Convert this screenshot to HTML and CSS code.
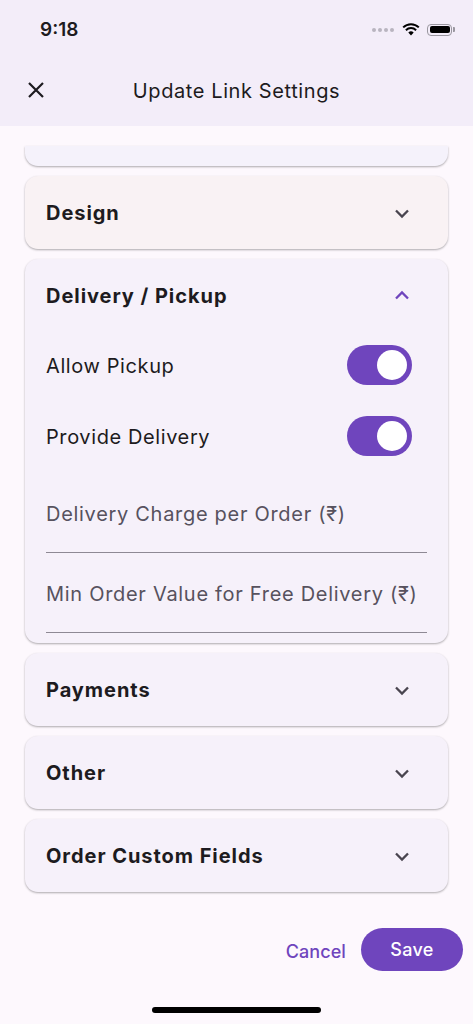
FILE: index.html
```html
<!DOCTYPE html>
<html lang="en">
<head>
  <meta charset="UTF-8" />
  <title>Update Link Settings</title>
  <link rel="stylesheet" href="styles.css">
</head>
<body>

  <div class="status">
    <span class="time">9:18</span>
    <div class="status-icons">
      <span class="dots"><i></i><i></i><i></i><i></i></span>
      <svg class="wifi" width="18" height="13" viewBox="0 0 18 13">
        <path d="M9 12.5 L6.3 9.6 A3.8 3.8 0 0 1 11.7 9.6 Z" fill="#000"/>
        <path d="M3.9 7.2 A7.2 7.2 0 0 1 14.1 7.2" stroke="#000" stroke-width="2" fill="none"/>
        <path d="M1.2 4.4 A11 11 0 0 1 16.8 4.4" stroke="#000" stroke-width="2" fill="none"/>
      </svg>
      <div class="battery"><div class="battery-fill"></div></div>
      <div class="battery-tip"></div>
    </div>
  </div>

  <header class="appbar">
    <svg class="close" width="24" height="24" viewBox="0 0 24 24">
      <path d="M5 5 L19 19 M19 5 L5 19" stroke="#1d1b20" stroke-width="2.2" fill="none"/>
    </svg>
    <h1>Update Link Settings</h1>
  </header>

  <main class="list">
    <div class="card cut"></div>

    <section class="card pink">
      <div class="card-head">
        <h2>Design</h2>
        <svg class="chev" width="24" height="24" viewBox="0 0 24 24"><path d="M6 9.5 L12 15.5 L18 9.5" stroke="#49454f" stroke-width="2.3" fill="none"/></svg>
      </div>
    </section>

    <section class="card">
      <div class="card-head">
        <h2>Delivery / Pickup</h2>
        <svg class="chev" width="24" height="24" viewBox="0 0 24 24"><path d="M6 14.5 L12 8.5 L18 14.5" stroke="#6f45bd" stroke-width="2.3" fill="none"/></svg>
      </div>
      <div class="switch-row">
        <span>Allow Pickup</span>
        <div class="switch"><div class="thumb"></div></div>
      </div>
      <div class="switch-row">
        <span>Provide Delivery</span>
        <div class="switch"><div class="thumb"></div></div>
      </div>
      <div class="fields">
        <div class="field">Delivery Charge per Order (₹)</div>
        <div class="field">Min Order Value for Free Delivery (₹)</div>
      </div>
    </section>

    <section class="card">
      <div class="card-head">
        <h2>Payments</h2>
        <svg class="chev" width="24" height="24" viewBox="0 0 24 24"><path d="M6 9.5 L12 15.5 L18 9.5" stroke="#49454f" stroke-width="2.3" fill="none"/></svg>
      </div>
    </section>

    <section class="card">
      <div class="card-head">
        <h2>Other</h2>
        <svg class="chev" width="24" height="24" viewBox="0 0 24 24"><path d="M6 9.5 L12 15.5 L18 9.5" stroke="#49454f" stroke-width="2.3" fill="none"/></svg>
      </div>
    </section>

    <section class="card">
      <div class="card-head">
        <h2>Order Custom Fields</h2>
        <svg class="chev" width="24" height="24" viewBox="0 0 24 24"><path d="M6 9.5 L12 15.5 L18 9.5" stroke="#49454f" stroke-width="2.3" fill="none"/></svg>
      </div>
    </section>
  </main>

  <footer class="actions">
    <button class="text-btn">Cancel</button>
    <button class="save-btn">Save</button>
  </footer>

  <div class="home-bar"></div>

</body>
</html>
```

FILE: styles.css
```css
html, body {
  margin: 0;
  padding: 0;
  background: #fdf8fd;
  font-family: Inter, Roboto, 'Noto Sans', sans-serif;
  color: #1d1b20;
}

body {
  width: 473px;
  height: 1024px;
  overflow: hidden;
  position: relative;
}

.status {
  height: 55px;
  background: #f3edf9;
  display: flex;
  align-items: center;
  justify-content: space-between;
  padding: 0 18px 0 40px;
  box-sizing: border-box;
}

.time {
  font-weight: 600;
  font-size: 19px;
  margin-top: 4px;
}

.status-icons {
  display: flex;
  align-items: center;
  margin-top: 4px;
}

.dots {
  display: flex;
  gap: 2px;
  margin-right: 8px;
}

.dots i {
  width: 4px;
  height: 4px;
  border-radius: 50%;
  background: #b9b4c0;
}

.wifi {
  margin-right: 7px;
}

.battery {
  width: 25px;
  height: 12px;
  border: 1.5px solid #9a97a0;
  border-radius: 4px;
  padding: 1.5px;
  box-sizing: border-box;
}

.battery-fill {
  width: 100%;
  height: 100%;
  background: #000;
  border-radius: 2px;
}

.battery-tip {
  width: 2px;
  height: 5px;
  background: #9a97a0;
  border-radius: 0 1px 1px 0;
  margin-left: 1px;
}

.appbar {
  height: 71px;
  background: #f3edf9;
  display: flex;
  align-items: center;
  position: relative;
}

.close {
  margin-left: 24px;
  margin-bottom: 1px;
}

.appbar h1 {
  position: absolute;
  left: 0;
  right: 0;
  text-align: center;
  margin: 0;
  font-size: 20px;
  font-weight: 400;
  letter-spacing: 0.6px;
  color: #1d1b20;
  pointer-events: none;
}

.list {
  margin-top: 20px;
  padding: 0 25px;
  display: flex;
  flex-direction: column;
  gap: 10px;
}

.card {
  background: #f6f1fa;
  border-radius: 13px;
  box-shadow: 0 1px 2px rgba(0, 0, 0, 0.25), 0 1px 3px rgba(0, 0, 0, 0.08);
}

.card.cut {
  height: 20px;
  border-radius: 0 0 13px 13px;
  background: #f5f2fb;
}

.card.pink {
  background: #f9f2f4;
}

.card-head {
  height: 73px;
  display: flex;
  align-items: center;
  justify-content: space-between;
  padding: 0 34px 0 21px;
}

.card-head h2 {
  margin: 1px 0 0;
  font-size: 20px;
  font-weight: 700;
  letter-spacing: 0.95px;
  color: #1d1b20;
}

.chev {
  display: block;
}

.switch-row {
  height: 66px;
  display: flex;
  align-items: center;
  justify-content: space-between;
  padding: 0 36px 0 21px;
  font-size: 20px;
  letter-spacing: 0.6px;
}

.switch-row span {
  margin-top: 1px;
}

.switch-row + .switch-row {
  margin-top: 5px;
}

.switch {
  width: 65px;
  height: 40px;
  border-radius: 20px;
  background: #6f45bd;
  display: flex;
  align-items: center;
  justify-content: flex-end;
  padding-right: 5px;
  box-sizing: border-box;
}

.thumb {
  width: 30px;
  height: 30px;
  border-radius: 50%;
  background: #fff;
}

.fields {
  padding: 4px 21px 10px;
}

.field {
  height: 80px;
  box-sizing: border-box;
  border-bottom: 1.5px solid #8e8994;
  display: flex;
  align-items: flex-end;
  padding-bottom: 26px;
  font-size: 20px;
  letter-spacing: 0.7px;
  color: #57525e;
}

.actions {
  position: absolute;
  top: 928px;
  right: 10px;
  display: flex;
  align-items: center;
  gap: 15px;
}

.text-btn {
  background: none;
  border: none;
  padding: 0;
  font-family: Inter, Roboto, sans-serif;
  font-size: 18px;
  font-weight: 500;
  letter-spacing: 0.1px;
  color: #6f45bd;
  margin-top: 3px;
}

.save-btn {
  width: 102px;
  height: 43px;
  border: none;
  border-radius: 22px;
  background: #6f45bd;
  color: #fff;
  font-family: Inter, Roboto, sans-serif;
  font-size: 18px;
  font-weight: 500;
  letter-spacing: 0.3px;
}

.home-bar {
  position: absolute;
  left: 152px;
  top: 1007px;
  width: 169px;
  height: 6px;
  border-radius: 3px;
  background: #000;
}
```
